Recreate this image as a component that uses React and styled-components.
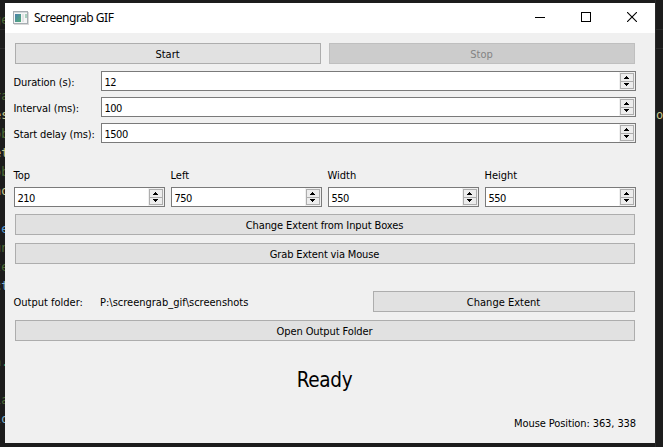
import React from 'react';
import styled, { createGlobalStyle } from 'styled-components';

const GlobalStyle = createGlobalStyle`
  * { box-sizing: border-box; }
  body { margin: 0; background: #1c1c1c; overflow: hidden; }
`;

const Desktop = styled.div`
  display: grid;
  grid-template-columns: 5px 650px 8px;
  width: 663px;
  height: 447px;
  overflow: hidden;
  background: #1c1c1c;
`;

const Gutter = styled.div`
  padding-top: 11px;
  overflow: hidden;
  border-left: ${(p) => (p.$side === 'right' ? '1px solid #292929' : '0')};
`;

const CodeLine = styled.div`
  height: 19px;
  margin-left: ${(p) => (p.$side === 'left' ? -6 : 0)}px;
  font: 12px/19px 'DejaVu Sans Mono', monospace;
  color: ${(p) => p.$color || '#4d6b35'};
  white-space: pre;
  border-bottom: ${(p) => (p.$rule ? '1px solid #2b2b2b' : '0')};
`;

const Window = styled.main`
  display: flex;
  flex-direction: column;
  width: 650px;
  height: 440px;
  margin-top: 3px;
  background: #f0f0f0;
  color: #000;
  font: 11px/14px 'DejaVu Sans Condensed', 'DejaVu Sans', sans-serif;
  font-stretch: condensed;
`;

const TitleBar = styled.header`
  display: flex;
  align-items: center;
  height: 30px;
  padding-left: 8px;
  background: #fff;
`;

const Title = styled.h1`
  flex: 1;
  margin: 0 0 1px 5px;
  font: 12px/16px 'Noto Sans', sans-serif;
  letter-spacing: -0.5px;
`;

const Caption = styled.div`
  display: grid;
  grid-template-columns: repeat(3, 46px);
  height: 30px;
  padding-bottom: 2px;
  justify-items: center;
  align-items: center;
`;

const Content = styled.div`
  display: flex;
  flex-direction: column;
  padding: 10px 19px 0 9px;
`;

const ButtonRow = styled.div`
  display: grid;
  grid-template-columns: 1fr 1fr;
  gap: 8px;
  padding: 0 1px;
`;

const PushButton = styled.button`
  display: flex;
  align-items: center;
  justify-content: center;
  height: 21px;
  padding: 2px 1px 0 0;
  border: 1px solid ${(p) => (p.disabled ? '#bfbfbf' : '#adadad')};
  background: ${(p) => (p.disabled ? '#ccc' : '#e1e1e1')};
  color: ${(p) => (p.disabled ? '#838383' : '#000')};
  font: inherit;
`;

const Text = styled.span`
  letter-spacing: ${(p) => p.$spacing || 0}px;
  white-space: nowrap;
`;

const Settings = styled.div`
  display: grid;
  grid-template-columns: 87px 1fr;
  row-gap: 6px;
  align-items: center;
  margin-top: 7px;
`;

const Label = styled.label`
  display: block;
  margin-left: -0.5px;
  padding-top: 3px;
`;

const SpinFrame = styled.div`
  display: flex;
  height: 20px;
  padding: 1px;
  border: 1px solid #7a7a7a;
  background: #fff;
`;

const Value = styled.div`
  flex: 1;
  padding: 1px 0 0 1.5px;
  line-height: 17px;
`;

const Stepper = styled.div`
  display: grid;
  grid-template-rows: 7px 6px;
  gap: 1px;
  width: 14px;
  height: 16px;
  border: 1px solid #adadad;
  background: #adadad;
  outline: 1px solid #f0f0f0;
`;

const Step = styled.div`
  display: flex;
  align-items: flex-start;
  justify-content: center;
  padding: ${(p) => (p.$up ? 2 : 1)}px 1px 0 0;
  background: #ededed;
`;

const Extents = styled.div`
  display: grid;
  grid-template-columns: repeat(4, 151px);
  gap: 6px;
  margin-top: 24px;
`;

const ExtentLabel = styled(Label)`
  height: 20px;
  padding-top: 2px;
`;

const WideButtons = styled.div`
  display: grid;
  gap: 8px;
  margin-top: 7px;
  padding: 0 1px;
`;

const OutputRow = styled.div`
  display: grid;
  grid-template-columns: 86px 273px 262px;
  align-items: center;
  margin-top: 27px;
`;

const Path = styled.div`
  padding-top: 3px;
`;

const OpenRow = styled(WideButtons)`
  margin-top: 8px;
`;

const Status = styled.div`
  margin-top: 25px;
  padding-right: 1px;
  text-align: center;
  font: 20.5px/28px 'DejaVu Sans Condensed', 'DejaVu Sans', sans-serif;
  font-stretch: condensed;
`;

const MousePosition = styled.div`
  margin-top: 23px;
  text-align: right;
`;

const leftCode = {
  0: ['ge', '#4d6b35'], 4: ['ra', '#4d6b35'], 5: ['es', '#c9c98c'],
  6: ['ob', '#4d6b35'], 7: ['et', '#c9c98c'], 8: ['ob', '#4d6b35'],
  9: ['no', '#c9c98c'], 11: [' e', '#569cd6'], 12: ['un', '#4d6b35'],
  13: ['te', '#4d6b35'], 14: ['ct', '#7eb2cf'], 18: ['n.', '#3f9b62'],
  20: ['ia', '#4d6b35'], 21: ['lo', '#7eb2cf'],
};
const rows = Array.from({ length: 23 }, (_, i) => i);

function AppIcon() {
  return (
    <svg width="16" height="14" viewBox="0 0 16 14" shapeRendering="crispEdges">
      <defs>
        <linearGradient id="screen" x1="0" y1="0" x2="1" y2="1">
          <stop offset="0" stopColor="#4b80ac" />
          <stop offset="1" stopColor="#53ad78" />
        </linearGradient>
      </defs>
      <path d="M0 0h15v13H0z" fill="#a6adb2" />
      <path d="M1 1h13v1H1z" fill="#d5dadd" />
      <path d="M1 2h13v10H1z" fill="#f5f6f6" />
      <path d="M2 3h6v8H2z" fill="url(#screen)" />
      <path d="M9 3h2v8H9z" fill="#e2e4e5" />
      <path d="M12 3h2v4h-2z" fill="#a9d0be" />
      <path d="M15 1h1v13H1v-1h14z" fill="#d9d9d9" />
    </svg>
  );
}

function SpinBox({ value }) {
  return (
    <SpinFrame>
      <Value><Text $spacing={-0.5}>{value}</Text></Value>
      <Stepper>
        <Step $up>
          <svg width="5" height="3" shapeRendering="crispEdges"><path d="M2 0h1v1h1v1h1v1H0V2h1V1h1z" /></svg>
        </Step>
        <Step>
          <svg width="5" height="3" shapeRendering="crispEdges"><path d="M0 0h5v1H4v1H3v1H2V2H1V1H0z" /></svg>
        </Step>
      </Stepper>
    </SpinFrame>
  );
}

const settings = [
  ['Duration (s):', '12', -0.1], ['Interval (ms):', '100', -0.1], ['Start delay (ms):', '1500', -0.12],
];
const extents = [['Top', '210'], ['Left', '750'], ['Width', '550'], ['Height', '550']];

export default function App() {
  return (
    <>
      <GlobalStyle />
      <Desktop>
        <Gutter $side="left">
          {rows.map((i) => (
            <CodeLine key={i} $side="left" $color={leftCode[i]?.[1]} $rule={i === 0 || i === 1}>{leftCode[i]?.[0]}</CodeLine>
          ))}
        </Gutter>
        <Window>
          <TitleBar>
            <AppIcon />
            <Title>Screengrab GIF</Title>
            <Caption>
              <svg width="10" height="10" shapeRendering="crispEdges"><path d="M0 5h10v1H0z" /></svg>
              <svg width="10" height="10" shapeRendering="crispEdges"><path d="M.5 .5h9v9h-9z" fill="none" stroke="#000" /></svg>
              <svg width="10" height="10"><path d="M0 0l10 10M10 0L0 10" stroke="#000" strokeWidth="1.1" /></svg>
            </Caption>
          </TitleBar>
          <Content>
            <ButtonRow>
              <PushButton><Text>Start</Text></PushButton>
              <PushButton disabled><Text>Stop</Text></PushButton>
            </ButtonRow>
            <Settings>
              {settings.map(([label, value, spacing]) => (
                <React.Fragment key={label}>
                  <Label><Text $spacing={spacing}>{label}</Text></Label>
                  <SpinBox value={value} />
                </React.Fragment>
              ))}
            </Settings>
            <Extents>
              {extents.map(([label, value]) => (
                <div key={label}>
                  <ExtentLabel><Text>{label}</Text></ExtentLabel>
                  <SpinBox value={value} />
                </div>
              ))}
            </Extents>
            <WideButtons>
              <PushButton><Text $spacing={-0.1}>Change Extent from Input Boxes</Text></PushButton>
              <PushButton><Text $spacing={-0.15}>Grab Extent via Mouse</Text></PushButton>
            </WideButtons>
            <OutputRow>
              <Label><Text>Output folder:</Text></Label>
              <Path><Text>P:\screengrab_gif\screenshots</Text></Path>
              <PushButton><Text>Change Extent</Text></PushButton>
            </OutputRow>
            <OpenRow>
              <PushButton><Text $spacing={-0.1}>Open Output Folder</Text></PushButton>
            </OpenRow>
            <Status><Text $spacing={-0.3}>Ready</Text></Status>
            <MousePosition><Text $spacing={-0.1}>Mouse Position: 363, 338</Text></MousePosition>
          </Content>
        </Window>
        <Gutter $side="right">
          {rows.map((i) => (
            <CodeLine key={i} $side="right" $color="#c9c98c" $rule={i === 0 || i === 1}>{i === 5 ? 'o' : ''}</CodeLine>
          ))}
        </Gutter>
      </Desktop>
    </>
  );
}
